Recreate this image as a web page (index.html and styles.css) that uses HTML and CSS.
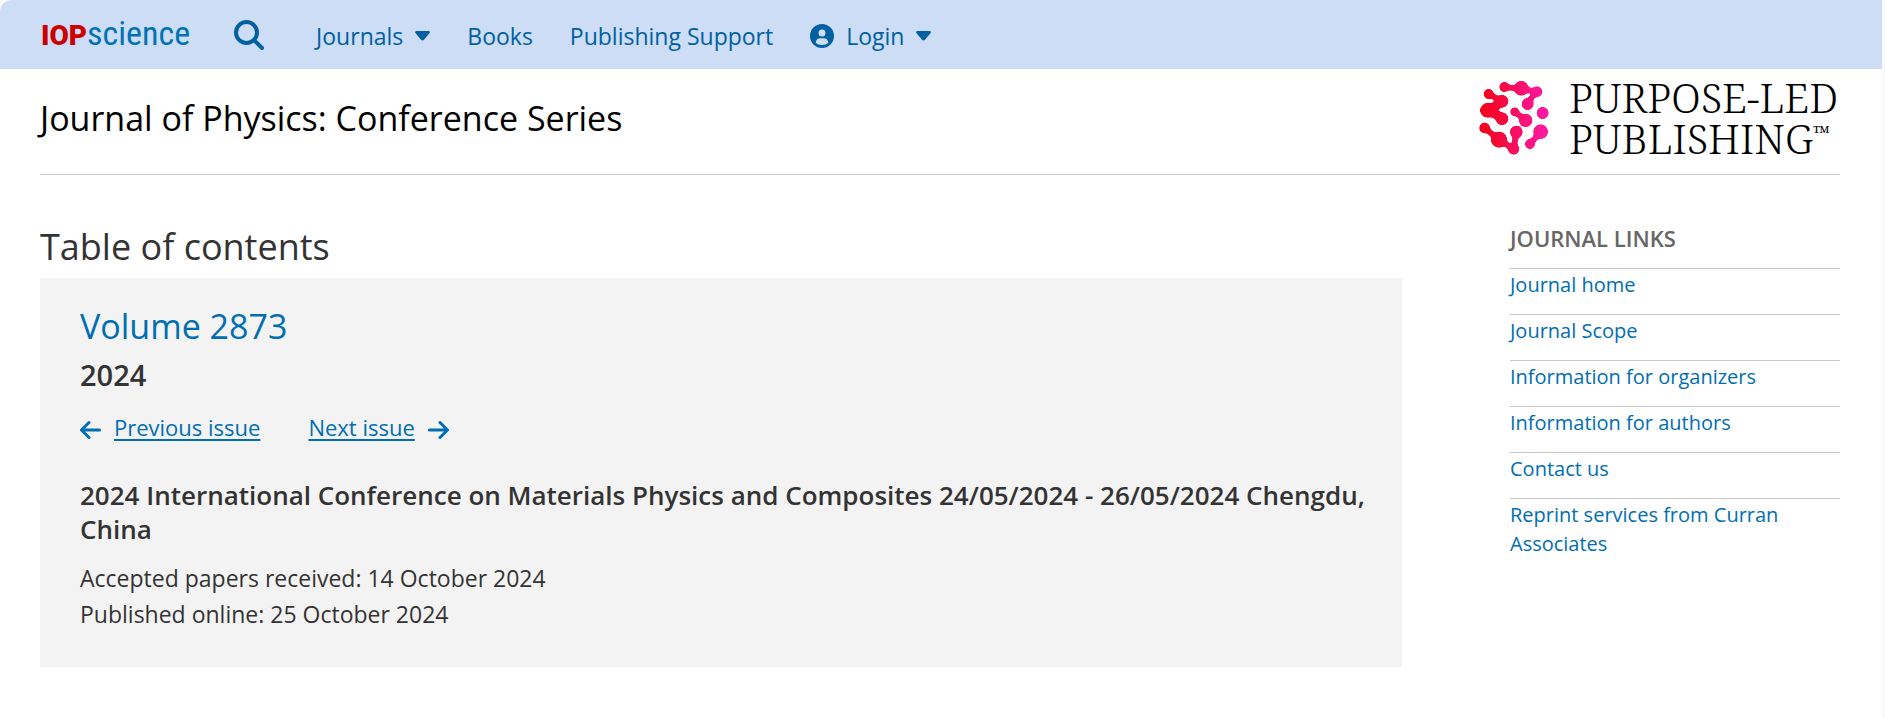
FILE: index.html
```html
<!DOCTYPE html>
<html lang="en">
<head>
<meta charset="utf-8">
<title>Journal of Physics: Conference Series, Volume 2873, 2024 - IOPscience</title>
<link rel="stylesheet" href="styles.css">
</head>
<body>
<header class="site-bar">
  <a class="brand" href="#"><span class="brand-iop">IOP</span><span class="brand-science">science</span></a>
  <button class="search-button" type="button" aria-label="Search">
    <svg width="30" height="30" viewBox="0 0 30 30" fill="none" stroke="currentColor" stroke-width="4" aria-hidden="true"><circle cx="12.5" cy="12.5" r="10.5"/><path d="M20.3 20.3 28 28" stroke-linecap="round"/></svg>
  </button>
  <nav class="site-nav" aria-label="Site">
    <button class="nav-item" type="button">Journals
      <svg class="caret" width="15" height="10" viewBox="0 0 15 10" aria-hidden="true"><path d="M1.2 0h12.6q1.8.5.8 2L9 8.7q-1.5 1.500-3 0L.4 2Q-.6.5 1.2 0z"/></svg>
    </button>
    <a class="nav-item" href="#">Books</a>
    <a class="nav-item" href="#">Publishing Support</a>
    <button class="nav-item" type="button">
      <svg class="user" width="24" height="24" viewBox="0 0 24 24" aria-hidden="true"><circle cx="12" cy="12" r="12"/><circle class="cutout" cx="12" cy="9" r="3.500"/><path class="cutout" d="M5.600 18.800C6 15.500 8 14.300 10 14.300h4c2 0 4 1.200 4.400 4.500C16.500 20.300 14.500 21 12 21s-4.500-.7-6.400-2.200z"/></svg>
      Login
      <svg class="caret" width="15" height="10" viewBox="0 0 15 10" aria-hidden="true"><path d="M1.2 0h12.6q1.8.5.8 2L9 8.700q-1.500 1.500-3 0L.4 2Q-.6.5 1.200 0z"/></svg>
    </button>
  </nav>
</header>
<div class="page">
  <div class="masthead">
    <p class="journal-title">Journal of Physics: Conference Series</p>
    <a class="plp" href="#" aria-label="Purpose-Led Publishing">
      <svg width="70" height="74" viewBox="26 20 208 222" aria-hidden="true">
        <defs>
          <linearGradient id="plp-fill" gradientUnits="userSpaceOnUse" x1="30" y1="0" x2="232" y2="0"><stop offset="0" stop-color="#f7001a"/><stop offset=".3" stop-color="#f50a3c"/><stop offset=".65" stop-color="#fb1278"/><stop offset="1" stop-color="#ff1aa6"/></linearGradient>
          <filter id="join" filterUnits="userSpaceOnUse" x="16" y="10" width="228" height="242" color-interpolation-filters="sRGB"><feGaussianBlur stdDeviation="4"/><feColorMatrix values="1 0 0 0 0 0 1 0 0 0 0 0 1 0 0 0 0 0 6 -1.700"/></filter>
        </defs>
        <g filter="url(#join)">
          <g fill="url(#plp-fill)">
            <circle cx="101" cy="38" r="14"/><circle cx="152" cy="42" r="21"/><circle cx="199" cy="52" r="15"/><circle cx="171" cy="89" r="17"/>
            <circle cx="54" cy="59" r="14"/><circle cx="94" cy="81" r="18"/><circle cx="51" cy="108" r="21"/><circle cx="94" cy="133" r="18"/>
            <circle cx="132" cy="112" r="12"/><circle cx="165" cy="138" r="19"/><circle cx="216" cy="116" r="17"/>
            <circle cx="42" cy="161" r="15"/><circle cx="85" cy="196" r="23"/><circle cx="129" cy="224" r="16"/><circle cx="137" cy="173" r="18"/>
            <circle cx="210" cy="172" r="21"/><circle cx="178" cy="209" r="14"/>
          </g>
          <path fill="none" stroke="url(#plp-fill)" stroke-width="14" d="M101 38 152 44 199 52Q182 68 171 89M54 59 94 81M132 112 165 138M42 161 85 196 129 224 137 173M210 172 178 209"/>
          <path fill="none" stroke="url(#plp-fill)" stroke-width="24" d="M94 84 51 108 94 130"/>
        </g>
      </svg>
      <span class="plp-text">PURPOSE-LED<br>PUBLISHING<span class="plp-tm">™</span></span>
    </a>
  </div>
  <div class="columns">
    <main class="contents">
      <h1 class="contents-title">Table of contents</h1>
      <section class="issue">
        <h2 class="issue-volume"><a href="#">Volume 2873</a></h2>
        <p class="issue-year">2024</p>
        <div class="issue-nav">
          <a class="issue-link" href="#"><svg width="21" height="24" viewBox="0 -6 21 24" aria-hidden="true"><path d="M9 1.500 1.500 9 9 16.500M2 9h17.500"/></svg><span>Previous issue</span></a>
          <a class="issue-link" href="#"><span>Next issue</span><svg width="21" height="24" viewBox="0 -6 21 24" aria-hidden="true"><path d="M12 1.500 19.500 9 12 16.500M19 9H1.500"/></svg></a>
        </div>
        <h3 class="issue-event">2024 International Conference on Materials Physics and Composites 24/05/2024 - 26/05/2024 Chengdu, China</h3>
        <p class="issue-date">Accepted papers received: 14 October 2024</p>
        <p class="issue-date">Published online: 25 October 2024</p>
      </section>
    </main>
    <aside class="links">
      <h2 class="links-title">JOURNAL LINKS</h2>
      <ul class="links-list">
        <li><a href="#">Journal home</a></li>
        <li><a href="#">Journal Scope</a></li>
        <li><a href="#">Information for organizers</a></li>
        <li><a href="#">Information for authors</a></li>
        <li><a href="#">Contact us</a></li>
        <li><a href="#">Reprint services from Curran Associates</a></li>
      </ul>
    </aside>
  </div>
</div>
</body>
</html>
```
FILE: styles.css
```css
*, *::before, *::after { box-sizing: border-box; }

html { background: #f9f9f9; }

body {
  margin: 0 3px 0 0;
  min-height: 100vh;
  background: linear-gradient(#fff, #fff) 0 69px no-repeat;
  font-family: "Open Sans", "Noto Sans", sans-serif;
  font-size: 23px;
  color: #333;
}

h1, h2, h3, p, ul { margin: 0; padding: 0; font-weight: 400; }
a { color: #006eb2; text-decoration: none; }
button { border: 0; padding: 0; background: none; font: inherit; cursor: pointer; }
svg { display: block; flex: none; }

.site-bar {
  display: flex;
  align-items: center;
  height: 69px;
  padding: 2px 42px 0 41px;
  background: #ccddf5;
  border-top-left-radius: 12px;
  color: #0060a0;
}

.brand { display: flex; align-items: baseline; line-height: 38px; padding-bottom: 2px; }
.brand-iop { font: 900 28px/38px Roboto, sans-serif; color: #c00; }
.brand-science { font: 400 34px/38px "Roboto Condensed", Roboto, sans-serif; color: #0072b5; }

.search-button { margin: 0 52px 0 44px; padding-bottom: 2px; color: inherit; }

.site-nav { display: flex; align-items: center; gap: 37px; }
.nav-item {
  display: flex;
  align-items: center;
  gap: 12px;
  line-height: 32px;
  color: #0060a0;
}
.caret, .user { fill: currentColor; }
.user .cutout { fill: #ccddf5; }

.page { padding: 0 42px 48px 40px; }

.masthead {
  display: flex;
  align-items: center;
  justify-content: space-between;
  min-height: 106px;
  padding-bottom: 7px;
  border-bottom: 1px solid #c8c8c8;
}
.journal-title { font-size: 34px; line-height: 44px; color: #000; }

.plp { display: flex; align-items: center; gap: 20px; padding-right: 2px; color: #000; }
.plp-text { font: 340 41px/41px "Noto Serif", "DejaVu Serif Condensed", serif; white-space: nowrap; }
.plp-tm { font-size: 20px; font-weight: 600; line-height: 20px; vertical-align: 14px; }

.columns { display: flex; align-items: flex-start; gap: 108px; padding-top: 48px; }

.contents { flex: 1; min-width: 0; }
.contents-title { margin-bottom: 7px; font-size: 36px; line-height: 48px; }

.issue { padding: 25px 28px 35px 40px; background: #f3f3f3; }
.issue-volume { font-size: 34px; line-height: 46px; }
.issue-year { margin-top: 6px; font-size: 29px; font-weight: 600; line-height: 40px; }
.issue-nav { display: flex; gap: 48px; margin-top: 17px; font-size: 22px; line-height: 30px; }
.issue-link { display: flex; align-items: center; gap: 13px; }
.issue-link span { text-decoration: underline 2px; text-underline-offset: 3px; }
.issue-link svg {
  fill: none;
  stroke: currentColor;
  stroke-width: 3;
  stroke-linecap: round;
  stroke-linejoin: round;
}
.issue-event { margin: 36px 0 14px; font-size: 26px; font-weight: 600; line-height: 34px; }
.issue-date { line-height: 36px; }

.links { flex: 0 0 330px; }
.links-title { margin-bottom: 15px; font-size: 22px; font-weight: 600; line-height: 30px; color: #666; }
.links-list { list-style: none; font-size: 20px; line-height: 29px; }
.links-list li { padding: 1px 0 15px; border-top: 1px solid #c8c8c8; }
```
